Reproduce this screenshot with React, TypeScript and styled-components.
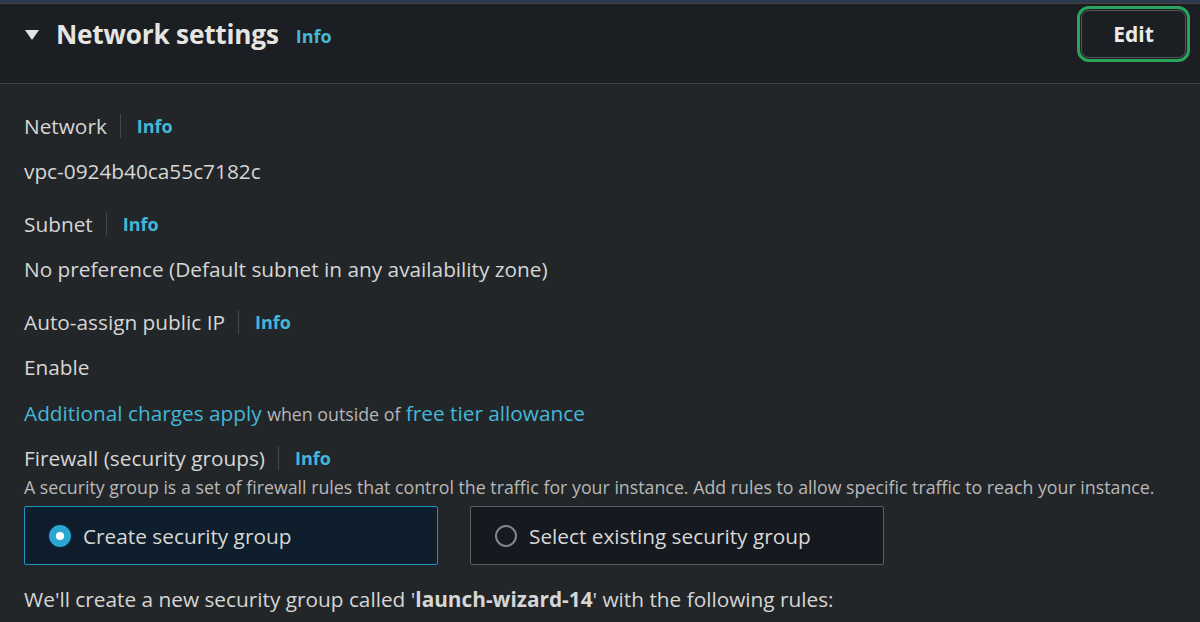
import React, { useState } from "react";
import styled, { createGlobalStyle } from "styled-components";

const GlobalStyle = createGlobalStyle`
  html, body {
    margin: 0;
    padding: 0;
    background: #232629;
  }
  body {
    font-family: "Open Sans", Lato, sans-serif;
    color: #d5d7da;
  }
`;

const Panel = styled.section`
  width: 1200px;
  height: 622px;
  overflow: hidden;
  background: #232629;
  border-top: 3px solid #2b3a4e;
`;

const Header = styled.header`
  display: flex;
  align-items: flex-start;
  justify-content: space-between;
  height: 81px;
  padding: 6px 14px 0 25px;
  background: #1b1e22;
  border-top: 1px solid #4a4036;
  border-bottom: 1px solid #3f4347;
  box-sizing: border-box;
`;

const HeaderLeft = styled.div`
  display: flex;
  align-items: center;
  height: 48px;
`;

const Caret = styled.span`
  width: 0;
  height: 0;
  border-left: 7px solid transparent;
  border-right: 7px solid transparent;
  border-top: 10px solid #e4e4e2;
  margin-right: 17px;
  margin-top: 1px;
`;

const Title = styled.h2`
  margin: 0;
  font-size: 26.2px;
  font-weight: 700;
  color: #e6e5e1;
  letter-spacing: -0.2px;
`;

const InfoLink = styled.a`
  color: #44b7d8;
  font-weight: 700;
  font-size: 18px;
  text-decoration: none;
  cursor: pointer;
`;

const HeaderInfo = styled(InfoLink)`
  margin-left: 17px;
  margin-top: 3px;
`;

const EditButton = styled.button`
  width: 105px;
  height: 48px;
  background: #1b1e22;
  color: #ecebe8;
  font-family: "Open Sans", Lato, sans-serif;
  font-size: 21px;
  font-weight: 700;
  border: 1px solid #54585d;
  border-radius: 8px;
  outline: 3px solid #2aa45a;
  outline-offset: 1px;
  cursor: pointer;
`;

const Body = styled.div`
  display: flex;
  flex-direction: column;
  padding: 28px 24px 0 24px;
`;

const Field = styled.div<{ $gap?: number }>`
  display: flex;
  flex-direction: column;
  margin-bottom: ${(p) => p.$gap ?? 25}px;
`;

const LabelRow = styled.div`
  display: flex;
  align-items: center;
  height: 28px;
`;

const Label = styled.span`
  font-size: 20.8px;
  color: #d5d6d5;
`;

const Divider = styled.span`
  width: 1px;
  height: 24px;
  background: #44484d;
  margin: 0 16px 0 13px;
`;

const Value = styled.div`
  margin-top: 17px;
  font-size: 20.8px;
  line-height: 28px;
  color: #d5d6d5;
`;

const Charges = styled.div`
  font-size: 20.8px;
  line-height: 28px;
  margin-bottom: 16px;
`;

const TextLink = styled.a`
  color: #44b7d8;
  text-decoration: none;
  cursor: pointer;
`;

const Muted = styled.span`
  font-size: 17.8px;
  color: #b4b6b8;
`;

const Description = styled.div`
  font-size: 17.8px;
  line-height: 22px;
  margin-top: 4px;
  color: #b7b8b8;
`;

const Tiles = styled.div`
  display: flex;
  gap: 32px;
  margin-top: 8px;
`;

const Tile = styled.label<{ $selected: boolean }>`
  display: flex;
  align-items: center;
  gap: 12px;
  width: 414px;
  height: 59px;
  box-sizing: border-box;
  padding-left: 24px;
  border-radius: 2px;
  border: 1px solid ${(p) => (p.$selected ? "#1d97c2" : "#5c6065")};
  background: ${(p) => (p.$selected ? "#0f1e2c" : "#161a20")};
  font-size: 20.8px;
  color: #d8d8d6;
  cursor: pointer;
`;

const Radio = styled.span<{ $checked: boolean }>`
  width: 22px;
  height: 22px;
  border-radius: 50%;
  box-sizing: border-box;
  display: flex;
  align-items: center;
  justify-content: center;
  background: ${(p) => (p.$checked ? "#2aa6d2" : "transparent")};
  border: ${(p) => (p.$checked ? "none" : "2px solid #80868b")};

  &::after {
    content: "";
    display: ${(p) => (p.$checked ? "block" : "none")};
    width: 8px;
    height: 8px;
    border-radius: 50%;
    background: #ffffff;
  }
`;

const Summary = styled.div`
  margin-top: 20px;
  font-size: 20.8px;
  line-height: 28px;
  color: #d5d6d5;

  b {
    font-weight: 700;
  }
`;

const tiles = [
  { id: "create", label: "Create security group" },
  { id: "existing", label: "Select existing security group" },
];

function App() {
  const [choice, setChoice] = useState("create");

  return (
    <>
      <GlobalStyle />
      <Panel>
        <Header>
          <HeaderLeft>
            <Caret />
            <Title>Network settings</Title>
            <HeaderInfo>Info</HeaderInfo>
          </HeaderLeft>
          <EditButton>Edit</EditButton>
        </Header>
        <Body>
          <Field>
            <LabelRow>
              <Label>Network</Label>
              <Divider />
              <InfoLink>Info</InfoLink>
            </LabelRow>
            <Value>vpc-0924b40ca55c7182c</Value>
          </Field>
          <Field>
            <LabelRow>
              <Label>Subnet</Label>
              <Divider />
              <InfoLink>Info</InfoLink>
            </LabelRow>
            <Value>No preference (Default subnet in any availability zone)</Value>
          </Field>
          <Field $gap={18}>
            <LabelRow>
              <Label>Auto-assign public IP</Label>
              <Divider />
              <InfoLink>Info</InfoLink>
            </LabelRow>
            <Value>Enable</Value>
          </Field>
          <Charges>
            <TextLink>Additional charges apply</TextLink>{" "}
            <Muted>when outside of</Muted> <TextLink>free tier allowance</TextLink>
          </Charges>
          <Field $gap={0}>
            <LabelRow>
              <Label>Firewall (security groups)</Label>
              <Divider />
              <InfoLink>Info</InfoLink>
            </LabelRow>
            <Description>
              A security group is a set of firewall rules that control the traffic for your
              instance. Add rules to allow specific traffic to reach your instance.
            </Description>
          </Field>
          <Tiles>
            {tiles.map((t) => (
              <Tile
                key={t.id}
                $selected={choice === t.id}
                onClick={() => setChoice(t.id)}
              >
                <Radio $checked={choice === t.id} />
                {t.label}
              </Tile>
            ))}
          </Tiles>
          <Summary>
            We'll create a new security group called '<b>launch-wizard-14</b>' with the
            following rules:
          </Summary>
        </Body>
      </Panel>
    </>
  );
}

export default App;
